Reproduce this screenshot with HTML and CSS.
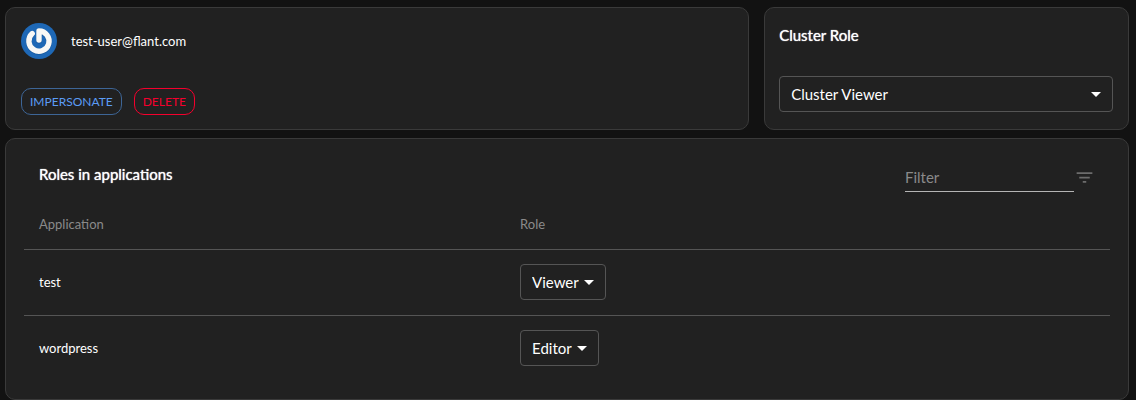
FILE: index.html
```html
<!DOCTYPE html>
<html lang="en">

<head>
    <meta charset="UTF-8">
    <meta name="viewport" content="width=device-width, initial-scale=1.0">
    <title>test-user@flant.com</title>
    <link rel="stylesheet" href="styles.css">
</head>

<body>
    <main class="page">
        <div class="top-row">
            <section class="card user-card">
                <div class="user-info">
                    <svg class="avatar" viewBox="0 0 36 36" aria-hidden="true">
                        <circle cx="18" cy="18" r="18" fill="#1e68b6" />
                        <path d="M11.2 10.6 A10.1 10.1 0 1 0 18 8 V17" transform="translate(0 .6)" fill="none"
                            stroke="#124a86" stroke-width="5.8" stroke-linecap="round" stroke-linejoin="round" opacity=".5" />
                        <path d="M11.2 10.6 A10.1 10.1 0 1 0 18 8 V17" fill="none" stroke="#f8f8f6"
                            stroke-width="5.4" stroke-linecap="round" stroke-linejoin="round" />
                    </svg>
                    <span class="user-email">test-user@flant.com</span>
                </div>
                <div class="user-actions">
                    <button type="button" class="btn btn-impersonate">IMPERSONATE</button>
                    <button type="button" class="btn btn-delete">DELETE</button>
                </div>
            </section>

            <section class="card cluster-card">
                <label class="card-title" for="cluster-role">Cluster Role</label>
                <select class="role-select role-select-wide" id="cluster-role">
                    <option>Cluster Admin</option>
                    <option selected>Cluster Viewer</option>
                </select>
            </section>
        </div>

        <section class="card roles-card">
            <div class="roles-header">
                <h2 class="card-title">Roles in applications</h2>
                <div class="filter">
                    <input class="filter-input" type="text" placeholder="Filter" aria-label="Filter">
                    <svg class="filter-icon" viewBox="0 0 24 24" aria-hidden="true">
                        <path d="M10 18h4v-2h-4v2zM3 6v2h18V6H3zm3 7h12v-2H6v2z" />
                    </svg>
                </div>
            </div>
            <table class="roles-table">
                <thead>
                    <tr>
                        <th class="col-app">Application</th>
                        <th>Role</th>
                    </tr>
                </thead>
                <tbody>
                    <tr>
                        <td>test</td>
                        <td>
                            <select class="role-select" aria-label="Role in test">
                                <option selected>Viewer</option>
                                <option>Editor</option>
                            </select>
                        </td>
                    </tr>
                    <tr>
                        <td>wordpress</td>
                        <td>
                            <select class="role-select" aria-label="Role in wordpress">
                                <option>Viewer</option>
                                <option selected>Editor</option>
                            </select>
                        </td>
                    </tr>
                </tbody>
            </table>
        </section>
    </main>
</body>

</html>
```
FILE: styles.css
```css
* {
    box-sizing: border-box;
}

body {
    margin: 0;
    background-color: #121212;
    color: #fff;
    font-family: Lato, sans-serif;
    font-size: 13px;
    line-height: 20px;
}

.page {
    display: flex;
    flex-direction: column;
    gap: 8px;
    padding: 7px 7px 0 5px;
}

.top-row {
    display: grid;
    grid-template-columns: 51fr 25fr;
    gap: 15px;
}

.card {
    background-color: #212121;
    border: 1px solid #3a3a3a;
    border-radius: 10px;
}

.card-title {
    margin: 0;
    font-size: 15px;
    font-weight: normal;
    line-height: 24px;
    text-shadow: 0 0 1px #fff;
}

/* User */
.user-card {
    display: flex;
    flex-direction: column;
    justify-content: space-between;
    gap: 29px;
    padding: 15px 15px 14px;
}

.user-info {
    display: flex;
    align-items: center;
    gap: 14px;
}

.avatar {
    width: 36px;
    height: 36px;
}

.user-actions {
    display: flex;
    gap: 12px;
}

.btn {
    height: 27px;
    padding: 0 8px;
    background: none;
    border: 1px solid;
    border-radius: 10px;
    font-family: inherit;
    font-size: 12px;
    cursor: pointer;
}

.btn-impersonate {
    color: #5b9cf5;
    border-color: #3d6596;
}

.btn-delete {
    color: #f5002d;
    border-color: #f5002d;
}

/* Cluster role */
.cluster-card {
    display: flex;
    flex-direction: column;
    justify-content: space-between;
    gap: 29px;
    padding: 15px 15px 17px 14px;
}

.role-select {
    appearance: none;
    field-sizing: content;
    display: block;
    height: 36px;
    padding: 0 26px 0 11px;
    background: url("data:image/svg+xml,%3Csvg xmlns='http://www.w3.org/2000/svg' width='10' height='6'%3E%3Cpath d='M0 1h10L5 6z' fill='white'/%3E%3C/svg%3E") no-repeat right 11px center;
    border: 1px solid #555;
    border-radius: 4px;
    color: #fff;
    font-family: inherit;
    font-size: 15px;
    cursor: pointer;
}

.role-select-wide {
    width: 100%;
}

/* Roles in applications */
.roles-card {
    padding: 23px 18px 18px;
}

.roles-header {
    display: flex;
    justify-content: space-between;
    padding: 0 15px;
}

.filter {
    display: flex;
    align-items: center;
}

.filter-input {
    width: 169px;
    height: 30px;
    padding: 0;
    background: none;
    border: none;
    border-bottom: 1px solid #b5b5b5;
    outline: none;
    color: #fff;
    font-family: inherit;
    font-size: 15px;
}

.filter-input::placeholder {
    color: #8a8a8a;
}

.filter-icon {
    width: 21px;
    height: 21px;
    fill: #6c6c6c;
}

.roles-table {
    width: 100%;
    margin-top: 8px;
    border-collapse: collapse;
}

.roles-table th,
.roles-table td {
    padding: 14px 15px 15px;
    text-align: left;
}

.roles-table th {
    color: #8a8a8a;
    font-weight: normal;
}

.roles-table tr:not(:last-child) td,
.roles-table th {
    border-bottom: 1px solid #555;
}

.col-app {
    width: 44.3%;
}
```
